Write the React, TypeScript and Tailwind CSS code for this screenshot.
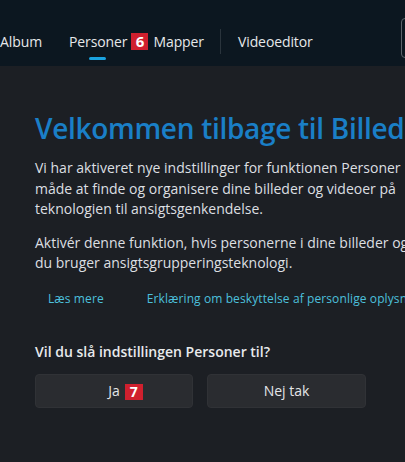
import React from "react";

export default function App() {
  return (
    <div className="w-[405px] h-[462px] overflow-hidden bg-[#1c1f24] text-white" style={{ fontFamily: '"Open Sans", "Noto Sans", sans-serif' }}>
      <div className="h-[66px] bg-[#0c1720] flex items-end relative">
        <div className="flex items-center h-[40px] pb-[9px] text-[14px] tracking-[-0.1px] text-[#e6e8ea] whitespace-nowrap">
          <span className="ml-0">Album</span>
          <span className="ml-[27px] relative">
            Personer
            <span className="absolute left-[20px] -bottom-[8px] w-[17px] h-[3px] rounded-full bg-[#1aa3e0]" />
          </span>
          <span className="ml-[4px] w-[17px] h-[17px] bg-[#d0202e] text-white font-bold text-[15px] flex items-center justify-center leading-none">6</span>
          <span className="ml-[5px]">Mapper</span>
          <span className="ml-[16px] w-px h-[25px] bg-[#2a343c]" />
          <span className="ml-[17px]">Videoeditor</span>
        </div>
        <div className="absolute left-[401px] top-[18px] w-[30px] h-[40px] border border-[#5b646b] rounded-[4px]" />
      </div>
      <div className="pl-[35px] pt-[44px] whitespace-nowrap">
        <div className="text-[28px] tracking-[-0.3px] leading-[36px] font-semibold text-[#1a7fc7]">Velkommen tilbage til Billededitor</div>
        <div className="mt-[12px] text-[14px] leading-[20.5px] text-[#dcdfe2]">
          <div>Vi har aktiveret nye indstillinger for funktionen Personer</div>
          <div>måde at finde og organisere dine billeder og videoer på</div>
          <div>teknologien til ansigtsgenkendelse.</div>
        </div>
        <div className="mt-[13px] text-[14px] leading-[20.5px] text-[#dcdfe2]">
          <div>Aktivér denne funktion, hvis personerne i dine billeder og</div>
          <div>du bruger ansigtsgrupperingsteknologi.</div>
        </div>
        <div className="mt-[17px] flex text-[12px] tracking-[0.1px] leading-[16px] text-[#4cc0dd]">
          <span className="ml-[13px]">Læs mere</span>
          <span className="ml-[43px]">Erklæring om beskyttelse af personlige oplysninger</span>
        </div>
        <div className="mt-[35px] text-[14px] leading-[20px] font-semibold text-[#e8eaec]">Vil du slå indstillingen Personer til?</div>
        <div className="mt-[12px] flex gap-[14px]">
          <div className="w-[158px] h-[34px] rounded-[4px] bg-[#2a2c30] border border-[#303236] flex items-center justify-center text-[14px] text-[#e4e6e8]">
            <span className="relative">
              Ja
              <span className="absolute left-[calc(100%+5px)] top-[4px] w-[18px] h-[16px] bg-[#d0202e] text-white font-bold text-[14px] flex items-center justify-center leading-none">7</span>
            </span>
          </div>
          <div className="w-[159px] h-[34px] rounded-[4px] bg-[#2a2c30] border border-[#303236] flex items-center justify-center text-[14px] text-[#e4e6e8]">
            Nej tak
          </div>
        </div>
      </div>
    </div>
  );
}
